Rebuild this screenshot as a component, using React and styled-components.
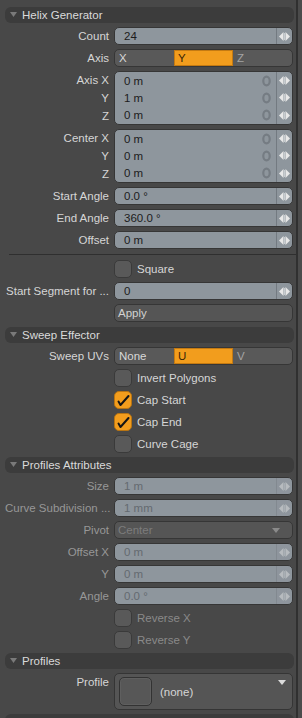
import React from 'react'
import styled, { createGlobalStyle } from 'styled-components'

const GlobalStyle = createGlobalStyle`
    html, body {
        margin: 0;
        padding: 0;
        background: #484848;
    }
    body {
        font-family: "Liberation Sans", Arial, sans-serif;
        font-size: 11.5px;
    }
`;

const Frame = styled.div`
    display: flex;
    width: 302px;
    height: 718px;
    overflow: hidden;
    background: #484848;
`;

const Panel = styled.div`
    flex: 1;
    display: flex;
    flex-direction: column;
    gap: 4px;
    padding: 7px 2px 0 5px;
    min-width: 0;
`;

const ScrollStrip = styled.div`
    width: 4px;
    border-left: 2px solid #303030;
    background: #4b4b4b;
`;

const Header = styled.div`
    flex: none;
    height: 16px;
    display: flex;
    align-items: center;
    gap: 5px;
    padding-left: 5px;
    background: #3c3c3c;
    border-radius: 6px;
    color: #dadada;
`;

const Row = styled.div`
    flex: none;
    display: grid;
    grid-template-columns: 104px 1fr;
    column-gap: 5px;
    padding-right: 1px;
    margin-bottom: ${p => p.$gapBottom || 0}px;
`;

const Label = styled.div`
    text-align: right;
    line-height: 18px;
    white-space: nowrap;
    color: ${p => (p.$dim ? '#979797' : '#d6d6d6')};
`;

const LabelStack = styled.div`
    display: flex;
    flex-direction: column;
`;

const Field = styled.div`
    height: ${p => (p.$lines || 1) * 18}px;
    box-sizing: border-box;
    display: flex;
    flex-direction: column;
    background: #8e969d;
    border: 1px solid #363636;
    border-radius: 5px;
    overflow: hidden;
`;

const FieldLine = styled.div`
    flex: 1;
    display: flex;
    align-items: center;
`;

const Value = styled.span`
    flex: 1;
    padding-left: 9px;
    color: ${p => (p.$dim ? '#646a70' : '#1c1c1c')};
`;

const KeyIcon = styled.svg`
    width: 9px;
    height: 12px;
    margin-right: 5px;
`;

const Spin = styled.div`
    width: 15px;
    align-self: stretch;
    border-left: 1px solid #737a81;
    display: flex;
    align-items: center;
    justify-content: center;
    opacity: ${p => (p.$dim ? 0.45 : 1)};
`;

const Segmented = styled.div`
    height: 18px;
    box-sizing: border-box;
    display: grid;
    grid-template-columns: repeat(3, 1fr);
    background: #595959;
    border: 1px solid #363636;
    border-radius: 5px;
    overflow: hidden;
`;

const SegItem = styled.div`
    padding-left: 4px;
    line-height: 16px;
    color: ${p => (p.$active ? '#3a2606' : p.$faint ? '#a4a4a4' : '#d8d8d8')};
    background: ${p => (p.$active ? '#f29d1d' : 'transparent')};
    box-shadow: ${p => (p.$active ? 'inset 0 0 0 1px #c47a12' : 'none')};
`;

const Button = styled.div`
    height: 18px;
    box-sizing: border-box;
    display: flex;
    align-items: center;
    padding: 0 6px 0 3px;
    background: #555555;
    border: 1px solid #363636;
    border-radius: 5px;
    color: ${p => (p.$dim ? '#7c7c7c' : '#d2d2d2')};
`;

const ButtonText = styled.span`
    flex: 1;
`;

const CheckWrap = styled.div`
    display: flex;
    align-items: center;
    gap: 5px;
    height: 18px;
    color: ${p => (p.$dim ? '#8a8a8a' : '#d6d6d6')};
`;

const CheckBox = styled.div`
    width: 18px;
    height: 18px;
    box-sizing: border-box;
    border-radius: 5px;
    border: 1px solid ${p => (p.$checked ? '#b87412' : '#3a3a3a')};
    background: ${p => (p.$checked ? '#f29d1d' : '#595959')};
    display: flex;
    align-items: center;
    justify-content: center;
`;

const Separator = styled.div`
    flex: none;
    height: 1px;
    margin: 1px -2px 1px 4px;
    background: #2f2f2f;
`;

const ProfileBox = styled.div`
    height: 37px;
    box-sizing: border-box;
    display: flex;
    align-items: center;
    gap: 8px;
    padding-left: 4px;
    background: #555555;
    border: 1px solid #353535;
    border-radius: 5px;
    color: #d6d6d6;
`;

const Swatch = styled.div`
    width: 33px;
    height: 29px;
    box-sizing: border-box;
    border: 1px solid #333333;
    border-radius: 5px;
    background: #575757;
    box-shadow: inset 0 0 0 1px #5f5f5f;
`;

const ProfileText = styled.span`
    flex: 1;
    padding-top: 1px;
`;

const Caret = styled.svg`
    width: 8px;
    height: 5px;
    margin-right: 6px;
    align-self: ${p => (p.$top ? 'flex-start' : 'center')};
    margin-top: ${p => (p.$top ? 6 : 0)}px;
`;

const Triangle = () => (
    <svg width="7" height="6" viewBox="0 0 7 6">
        <polygon points="0,0 7,0 3.5,5" fill="#7a7a7a" />
    </svg>
);

const Arrows = () => (
    <svg width="11" height="9" viewBox="0 0 11 9">
        <polygon points="0,4.5 4.5,0 4.5,9" fill="#e8e8e8" />
        <polygon points="6.5,0 11,4.5 6.5,9" fill="#e8e8e8" />
        <rect x="5" y="1" width="1" height="7" fill="#c8cdd1" />
    </svg>
);

const Key = () => (
    <KeyIcon viewBox="0 0 9 12">
        <ellipse cx="4.5" cy="6" rx="3.2" ry="4.4" fill="none" stroke="#757c83" strokeWidth="2.2" />
    </KeyIcon>
);

const Check = () => (
    <svg width="14" height="13" viewBox="0 0 14 13">
        <path d="M2.5 7.5 L4.5 11 L12.5 2" fill="none" stroke="#151515" strokeWidth="2" strokeLinecap="round" strokeLinejoin="round" />
    </svg>
);

function NumberRow({ label, value, dim, keyed }) {
    return (
        <Row>
            <Label $dim={dim}>{label}</Label>
            <Field>
                <FieldLine>
                    <Value $dim={dim}>{value}</Value>
                    {keyed && <Key />}
                    <Spin $dim={dim}><Arrows /></Spin>
                </FieldLine>
            </Field>
        </Row>
    );
}

function VectorRow({ labels, values }) {
    return (
        <Row>
            <LabelStack>
                {labels.map(l => <Label key={l}>{l}</Label>)}
            </LabelStack>
            <Field $lines={3}>
                {values.map((v, i) => (
                    <FieldLine key={i}>
                        <Value>{v}</Value>
                        <Key />
                        <Spin><Arrows /></Spin>
                    </FieldLine>
                ))}
            </Field>
        </Row>
    );
}

function SegRow({ label, items, active }) {
    return (
        <Row>
            <Label>{label}</Label>
            <Segmented>
                {items.map((it, i) => (
                    <SegItem key={it} $active={i === active} $faint={i > active}>{it}</SegItem>
                ))}
            </Segmented>
        </Row>
    );
}

function CheckRow({ label, checked, dim }) {
    return (
        <Row>
            <span />
            <CheckWrap $dim={dim}>
                <CheckBox $checked={checked}>{checked && <Check />}</CheckBox>
                {label}
            </CheckWrap>
        </Row>
    );
}

function Section({ title }) {
    return (
        <Header>
            <Triangle />
            {title}
        </Header>
    );
}

export default function App() {
    return (
        <Frame>
            <GlobalStyle />
            <Panel>
                <Section title="Helix Generator" />
                <NumberRow label="Count" value="24" />
                <SegRow label="Axis" items={['X', 'Y', 'Z']} active={1} />
                <VectorRow labels={['Axis X', 'Y', 'Z']} values={['0 m', '1 m', '0 m']} />
                <VectorRow labels={['Center X', 'Y', 'Z']} values={['0 m', '0 m', '0 m']} />
                <NumberRow label="Start Angle" value="0.0 °" />
                <NumberRow label="End Angle" value="360.0 °" />
                <NumberRow label="Offset" value="0 m" />
                <Separator />
                <CheckRow label="Square" />
                <NumberRow label="Start Segment for ..." value="0" />
                <Row $gapBottom={1}>
                    <span />
                    <Button><ButtonText>Apply</ButtonText></Button>
                </Row>

                <Section title="Sweep Effector" />
                <SegRow label="Sweep UVs" items={['None', 'U', 'V']} active={1} />
                <CheckRow label="Invert Polygons" />
                <CheckRow label="Cap Start" checked />
                <CheckRow label="Cap End" checked />
                <CheckRow label="Curve Cage" />

                <Section title="Profiles Attributes" />
                <NumberRow label="Size" value="1 m" dim />
                <NumberRow label="Curve Subdivision ..." value="1 mm" dim />
                <Row>
                    <Label $dim>Pivot</Label>
                    <Button $dim>
                        <ButtonText>Center</ButtonText>
                        <Caret viewBox="0 0 8 5"><polygon points="0,0 8,0 4,5" fill="#8a8a8a" /></Caret>
                    </Button>
                </Row>
                <NumberRow label="Offset X" value="0 m" dim />
                <NumberRow label="Y" value="0 m" dim />
                <NumberRow label="Angle" value="0.0 °" dim />
                <CheckRow label="Reverse X" dim />
                <CheckRow label="Reverse Y" dim />

                <Section title="Profiles" />
                <Row>
                    <Label>Profile</Label>
                    <ProfileBox>
                        <Swatch />
                        <ProfileText>(none)</ProfileText>
                        <Caret $top viewBox="0 0 8 5"><polygon points="0,0 8,0 4,5" fill="#dcdcdc" /></Caret>
                    </ProfileBox>
                </Row>
                <Section title="" />
            </Panel>
            <ScrollStrip />
        </Frame>
    );
}
